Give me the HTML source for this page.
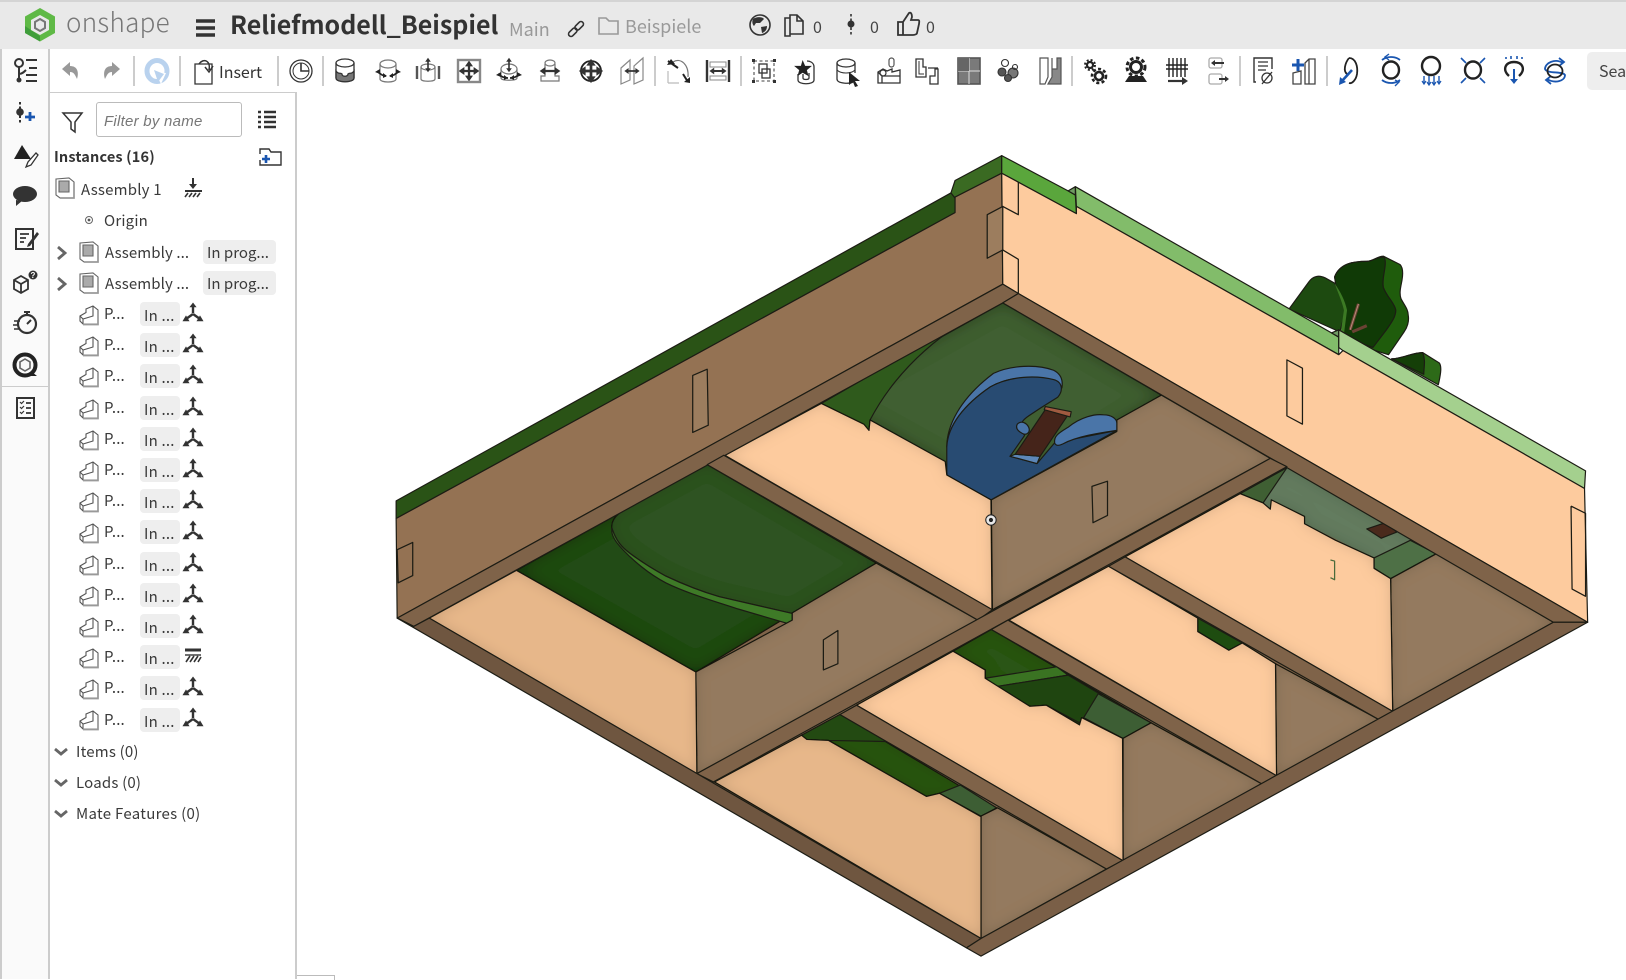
<!DOCTYPE html>
<html><head><meta charset="utf-8"><title>Reliefmodell_Beispiel</title>
<style>
html,body{margin:0;padding:0;background:#fff}
body{width:1626px;height:979px;overflow:hidden;position:relative;font-family:"Noto Sans CJK JP","Liberation Sans",sans-serif;color:#333}
.a{position:absolute;white-space:nowrap;line-height:1}
svg{position:absolute;left:0;top:0;overflow:visible}
.tag{position:absolute;background:#eee;border-radius:4px}
.t{position:absolute;white-space:nowrap;line-height:20px;font-size:15px;color:#3a3a3a;letter-spacing:.2px}
</style></head><body>
<div class="a" style="left:0;top:0;width:1626px;height:49px;background:#e9e9e9;border-top:2px solid #d4d4d4;box-sizing:border-box"></div>
<div class="a" style="left:0;top:49px;height:930px;background:#fafafa;border-left:2px solid #ccc;border-right:2px solid #ccc;width:46px"></div>
<div class="a" style="left:50px;top:92px;width:247px;height:887px;border-top:1px solid #ccc;border-right:2px solid #ccc;box-sizing:border-box;background:#fff"></div>
<div class="a" style="left:297px;top:975px;width:37px;height:4px;border-top:1px solid #bbb;border-right:1px solid #bbb"></div>
<div class="a" style="left:2px;top:386px;width:46px;height:1px;background:#ccc"></div>
<div class="a" style="left:1587px;top:52px;width:39px;height:38px;background:#eee;border-radius:5px 0 0 5px"></div>
<div class="a" style="left:1599px;top:62px;font-size:16px;color:#444">Sea</div>

<div class="a" style="left:66px;top:9px;font-size:26px;color:#777;font-weight:300;letter-spacing:.3px">onshape</div>
<div class="a" style="left:230px;top:12px;font-size:25px;font-weight:700;color:#333;letter-spacing:0">Reliefmodell_Beispiel</div>
<div class="a" style="left:509px;top:20px;font-size:18px;color:#999">Main</div>
<div class="a" style="left:625px;top:17px;font-size:18px;color:#999">Beispiele</div>
<div class="a" style="left:813px;top:18px;font-size:16px;color:#444">0</div>
<div class="a" style="left:870px;top:18px;font-size:16px;color:#444">0</div>
<div class="a" style="left:926px;top:18px;font-size:16px;color:#444">0</div>
<div class="a" style="left:219px;top:63px;font-size:16px;color:#333">Insert</div>

<div class="a" style="left:96px;top:102px;width:146px;height:35px;border:1px solid #bbb;border-radius:3px;box-sizing:border-box"></div>
<div class="a" style="left:104px;top:114px;font-size:15px;font-style:italic;color:#777;letter-spacing:.25px;font-family:'Liberation Sans',sans-serif">Filter by name</div>
<div class="a" style="left:54px;top:150px;font-size:14.5px;font-weight:700;color:#333;letter-spacing:.15px">Instances (16)</div>

<div class="t" style="left:81px;top:180px">Assembly 1</div>
<div class="t" style="left:104px;top:211px">Origin</div>
<div class="t" style="left:105px;top:243px;letter-spacing:.1px">Assembly ...</div><div class="tag" style="left:203px;top:240px;width:73px;height:24px"></div><div class="t" style="left:207px;top:243px;letter-spacing:0">In prog...</div>
<div class="t" style="left:105px;top:274px;letter-spacing:.1px">Assembly ...</div><div class="tag" style="left:203px;top:271px;width:73px;height:24px"></div><div class="t" style="left:207px;top:274px;letter-spacing:0">In prog...</div>

<div class="t" style="left:104px;top:304px">P...</div><div class="tag" style="left:140px;top:302px;width:40px;height:24px"></div><div class="t" style="left:144px;top:306px">In ...</div>
<div class="t" style="left:104px;top:335px">P...</div><div class="tag" style="left:140px;top:333px;width:40px;height:24px"></div><div class="t" style="left:144px;top:337px">In ...</div>
<div class="t" style="left:104px;top:366px">P...</div><div class="tag" style="left:140px;top:364px;width:40px;height:24px"></div><div class="t" style="left:144px;top:368px">In ...</div>
<div class="t" style="left:104px;top:398px">P...</div><div class="tag" style="left:140px;top:396px;width:40px;height:24px"></div><div class="t" style="left:144px;top:400px">In ...</div>
<div class="t" style="left:104px;top:429px">P...</div><div class="tag" style="left:140px;top:427px;width:40px;height:24px"></div><div class="t" style="left:144px;top:431px">In ...</div>
<div class="t" style="left:104px;top:460px">P...</div><div class="tag" style="left:140px;top:458px;width:40px;height:24px"></div><div class="t" style="left:144px;top:462px">In ...</div>
<div class="t" style="left:104px;top:491px">P...</div><div class="tag" style="left:140px;top:489px;width:40px;height:24px"></div><div class="t" style="left:144px;top:493px">In ...</div>
<div class="t" style="left:104px;top:522px">P...</div><div class="tag" style="left:140px;top:520px;width:40px;height:24px"></div><div class="t" style="left:144px;top:524px">In ...</div>
<div class="t" style="left:104px;top:554px">P...</div><div class="tag" style="left:140px;top:552px;width:40px;height:24px"></div><div class="t" style="left:144px;top:556px">In ...</div>
<div class="t" style="left:104px;top:585px">P...</div><div class="tag" style="left:140px;top:583px;width:40px;height:24px"></div><div class="t" style="left:144px;top:587px">In ...</div>
<div class="t" style="left:104px;top:616px">P...</div><div class="tag" style="left:140px;top:614px;width:40px;height:24px"></div><div class="t" style="left:144px;top:618px">In ...</div>
<div class="t" style="left:104px;top:647px">P...</div><div class="tag" style="left:140px;top:645px;width:40px;height:24px"></div><div class="t" style="left:144px;top:649px">In ...</div>
<div class="t" style="left:104px;top:678px">P...</div><div class="tag" style="left:140px;top:676px;width:40px;height:24px"></div><div class="t" style="left:144px;top:680px">In ...</div>
<div class="t" style="left:104px;top:710px">P...</div><div class="tag" style="left:140px;top:708px;width:40px;height:24px"></div><div class="t" style="left:144px;top:712px">In ...</div>
<div class="t" style="left:76px;top:742px">Items (0)</div>
<div class="t" style="left:76px;top:773px">Loads (0)</div>
<div class="t" style="left:76px;top:804px;letter-spacing:.3px">Mate Features (0)</div>

<!-- 3D model -->
<svg width="1626" height="979" viewBox="0 0 1568 944" style="left:0;top:0">
<defs>
<filter id="ao" x="-10%" y="-10%" width="120%" height="120%"><feFlood flood-color="#000" flood-opacity=".6" result="f"/><feComposite in="f" in2="SourceAlpha" operator="out" result="o"/><feGaussianBlur in="o" stdDeviation="8" result="b"/><feComposite in="b" in2="SourceAlpha" operator="in" result="i"/><feMerge><feMergeNode in="SourceGraphic"/><feMergeNode in="i"/></feMerge></filter>
<filter id="ao2" x="-10%" y="-10%" width="120%" height="120%"><feFlood flood-color="#000" flood-opacity=".32" result="f"/><feComposite in="f" in2="SourceAlpha" operator="out" result="o"/><feGaussianBlur in="o" stdDeviation="7" result="b"/><feComposite in="b" in2="SourceAlpha" operator="in" result="i"/><feMerge><feMergeNode in="SourceGraphic"/><feMergeNode in="i"/></feMerge></filter>
</defs>
<g stroke="#1c1c14" stroke-width="1.15" stroke-linejoin="round">
<!-- tree -->
<path d="M1287,267 C1292,254 1305,252 1318,252 C1324,252 1328,247 1334,247 L1350,255 C1353,258 1353,264 1352,270 C1351,276 1349,282 1351,288 C1354,294 1358,298 1358,304 C1359,310 1357,316 1354,320 L1339,342 L1300,330 Z" fill="#1f5c0c"/>
<path d="M1287,267 C1292,254 1305,252 1318,252 C1324,252 1328,247 1335,248 C1338,256 1332,268 1334,277 C1337,286 1345,292 1346,299 C1346,306 1341,312 1337,318 L1324,335 L1295,325 Z" fill="#103a06"/>
<path d="M1243,298 L1262,272 C1266,266 1272,265 1278,268 L1287,273 C1292,282 1296,290 1298,299 L1292,320 Z" fill="#1d4a10"/>
<path d="M1287,273 C1293,282 1297,290 1299,299 L1296,322 L1293,320 L1296,299 C1294,290 1290,282 1287,273 Z" fill="#3c7a24" stroke="none"/>
<path d="M1342,346 C1352,346 1362,340 1372,340 L1388,350 C1390,353 1390,358 1387,371 Z" fill="#2d6a18"/>
<path d="M1342,346 C1352,346 1362,340 1372,340 C1375,348 1373,354 1373,361 Z" fill="#153f08"/>
<path d="M1310,293 L1302,318 M1304,320 L1318,314" fill="none" stroke="#6b4234" stroke-width="3"/>
<path d="M1310,293 L1302,318" fill="none" stroke="#b58b78" stroke-width="1"/>
<!-- top strips -->
<polygon points="382,483 917,186 921,183 921,205 382,500" fill="#2a5316"/>
<polygon points="917,186 921,174 966,150 966,167 921,191" fill="#3a6a22"/>
<polygon points="966,150 1030,184 1037,188 1038,206 966,167" fill="#5aa63c"/>
<polygon points="1030,184 1037,180 1037,188" fill="#6f9a62"/>
<polygon points="1037,180 1284,321 1291,325 1291,342 1038,199" fill="#82bc6a"/>
<polygon points="1284,321 1291,318 1291,325" fill="#6f9a62"/>
<polygon points="1291,318 1529,454 1528,471 1295,338 1291,335" fill="#a4d08e"/>
<!-- outer walls -->
<polygon points="382,500 921,205 921,190 966,167 967,274 383,596" fill="#947253"/>
<polygon points="966,167 1038,206 1038,199 1291,342 1295,338 1528,471 1531,600 982,283 967,274" fill="#fdcb9e"/>
<!-- base under interior -->
<polygon points="383,596 967,274 1531,600 946,922" fill="#7f6349" stroke="none"/>
<!-- floor greens -->
<polygon points="792,389 967,292 1120,381 955,482 913,458 911,445 839,405" fill="#415f33" filter="url(#ao)"/>
<path d="M792,389 L926,312 Q868,350 839,405 L838,415 L832,409 Z" fill="#2f5a1c"/>
<polygon points="498,550 682,448 845,543 671,648" fill="#234b12" filter="url(#ao)"/>
<path d="M682,448 L845,543 L764,591.5 L693.6,575.4 C675,570 660,564 642,555.5 C630,549 620,543 607.5,533.6 C600,528 594,522 590,509 C589,498 600,492 614,485 Z" fill="#2f5320" filter="url(#ao2)"/>
<path d="M590,509 C594,522 600,528 607.5,533.6 C620,543 630,549 642,555.5 C660,564 675,570 693.6,575.4 L764,591.5 L764,601 L759,601 L711,587 C690,580 662,572 642,562 C625,553 610,540 600.6,530 C595,524 591,519 590,513 Z" fill="#3e7a27"/>
<polygon points="1196,476 1241,450 1385,534 1341,558 1325,548 1325,538 1258,505 1258,498 1226,482 1225,491 1218,485" fill="#647c5f" stroke="none" filter="url(#ao2)"/>
<polygon points="1196,476 1241,451 1218,485" fill="#3f5f33"/>
<polygon points="1325,538 1360,521 1385,534 1341,558 1325,548" fill="#4e7046"/>
<polygon points="1318,510 1336,504 1347,513 1332,519" fill="#4a2a1c"/>
<polygon points="1155,596 1198,620 1185,627 1155,609" fill="#1e4c10"/>
<polygon points="919,628 956,607 1110,697 1083,712 1043,692 1041,699 1009,680 993,681 950,654 950,646" fill="#2a5518" filter="url(#ao2)"/>
<polygon points="950,654 1019,643 1030,651 961,662" fill="#3a7322"/>
<polygon points="961,662 1030,651 1062,670 1041,697 1009,680 993,681" fill="#1f4510"/>
<polygon points="1059,669 1110,697 1083,712 1045,692" fill="#3d5e34"/>
<polygon points="773,709 810,689 961,779 946,787 906,765 893,768 799,714 778,713" fill="#2a5518" filter="url(#ao2)"/>
<polygon points="773,709 810,689 855,715 799,714 778,713" fill="#234a12"/>
<polygon points="906,765 926,757 961,779 946,787" fill="#3d5e34"/>
<!-- walls (wall 2 right drawn before blue part) -->
<polygon points="956,482 1077,416 1077,405 1120,381 1225,442 957,588" fill="#947a5e" filter="url(#ao2)"/>
<!-- blue part -->
<path d="M913,431 C913,411 925,385 958,360 C975,352 1000,351 1016,357 C1024,361 1025,368 1024,374 L1016,372 C1000,362 975,362 955,373 C930,390 914,410 913,431 Z" fill="#4a75a8"/>
<path d="M913,458 L913,431 C914,410 930,390 955,373 C975,362 1000,362 1016,366 C1024,368 1026,376 1020,383 L1004,393 L992,401 C986,405 982,410 986,416 L988,420 L974,440 L1000,447 L1017,427 L1077,415 L955.6,482 Z" fill="#284b72"/>
<path d="M981,409 C985,405 990,408 992,412 C994,417 990,420 986,418 C982,416 979,413 981,409 Z" fill="#4a75a8"/>
<path d="M1017,427 C1016,420 1022,417 1030,412 C1042,402 1056,399 1064,400 C1072,400 1077,404 1077,408 L1077,415 C1064,417 1040,420 1025,428 C1021,430 1018,430 1017,427 Z" fill="#4a75a8"/>
<polygon points="974,440 979,438 1003,440 1000,447" fill="#5d87b8"/>
<polygon points="979,438 1008,395 1030,400 1003,440" fill="#45241a"/>
<polygon points="1008,392 1033,397 1032,402 1007,395" fill="#a05a40"/>
<!-- walls -->
<polygon points="671,648 764,598 764,591 845,543 943,598 672,746" fill="#947a5e" filter="url(#ao2)"/>
<polygon points="1341,558 1385,534 1498,600 1343,687" fill="#947a5e" filter="url(#ao2)"/>
<polygon points="1230,640 1330,694 1231,748" fill="#947a5e" filter="url(#ao2)"/>
<polygon points="1083,712 1110,697 1217,756 1083,830" fill="#947a5e" filter="url(#ao2)"/>
<polygon points="946,787 962,779 1067,838 946,905" fill="#947a5e" filter="url(#ao2)"/>
<!-- peach faces -->
<polygon points="414,596 498,550 671,648 672,746" fill="#e7b78a" filter="url(#ao2)"/>
<polygon points="699,439 792,389 833,409 838,415 839,405 911.5,445 913,458 955.6,482 956.6,588" fill="#fdcb9e" filter="url(#ao2)"/>
<polygon points="1085,537 1196,476 1218,485 1225,491 1226,482 1258,498 1258,505 1288,521 1325,538 1325,548 1341,558 1343,686" fill="#fdcb9e" filter="url(#ao2)"/>
<polygon points="973,598 1069,546 1155,596 1155,609 1185,627 1198,620 1230,640 1231,748" fill="#fdcb9e" filter="url(#ao2)"/>
<polygon points="826,680 919,628 950,646 950,654 993,681 1009,680 1041,699 1043,692 1082.5,712 1083,830" fill="#fdcb9e" filter="url(#ao2)"/>
<polygon points="689,754 773,709 778,713 799,714 893.5,768 906,765 946,787.5 946,905" fill="#e7b78a" filter="url(#ao2)"/>
<!-- strips -->
<polygon points="383,596 399,604 967,292 982,283 967,274" fill="#7f6349"/>
<polygon points="982,283 1531,600 1498,600 967,292" fill="#7f6349"/>
<polygon points="682,448 698,439 957,588 943,598" fill="#7f6349"/>
<polygon points="672,746 688,754 1241,450 1225,442" fill="#7f6349"/>
<polygon points="1069,546 1085,537 1343,686 1330,694" fill="#7f6349"/>
<polygon points="956,607 972,598 1231,748 1217,756" fill="#7f6349"/>
<polygon points="810,689 826,680 1083,830 1067,838" fill="#7f6349"/>
<polygon points="383,596 399,604 414,596 946,905 932,914" fill="#6f5640"/>
<polygon points="932,914 946,905 1498,600 1531,600 946,922" fill="#7a5f47"/>
<!-- slots -->
<g fill="none" stroke-width="1.2">
<polygon points="668,362 682,356 683,410 668,417" fill="#9c7d5e"/>
<polygon points="1053,469 1068,464 1068,497 1054,504"/>
<polygon points="794,617 808,608 808,640 794,646"/>
<polygon points="383,530 398,523 398,555 384,562"/>
<polygon points="1241,347 1256,355 1256,409 1241,401"/>
<polyline points="1515,488 1529,495 1529,575 1516,568 1515,488"/>
<polygon points="967,199 952,207 952,249 967,241" fill="#9c7d5e"/>
<polyline points="982,176 982,207 967,199"/>
<polyline points="967,241 982,250 982,283"/>
<path d="M1283,540 L1287,541 L1287,559 L1283,557" stroke="#4a6a3a"/>
</g>
</g>
<circle cx="955.6" cy="501.4" r="5" fill="#e8e8e8" stroke="#222" stroke-width="1"/><circle cx="955.6" cy="501.4" r="2" fill="#222"/>
</svg>

<!-- UI icons -->
<svg width="1626" height="979" viewBox="0 0 1626 979" fill="none" stroke="#333" stroke-width="1.6">
<defs>
<g id="part" stroke="#555" stroke-width="1.1" fill="#fff"><path d="M-9,1 L-3,-2.5 V-6 L4,-9 L9,-5 V9 H-6 L-9,6 Z"/><path d="M-9,1 L-6,4 L4,1 V-9 M-6,4 V9" fill="none"/><path d="M9,-5 V9.5 H-6" stroke="#999" stroke-width="1.7" fill="none"/></g>
<g id="asm" stroke="#666" stroke-width="1.1"><path d="M-9,-9 L4,-10 L9,-6 V10 H-5 L-9,7 Z" fill="#fff"/><path d="M-6,-7 L4,-7 V4 H-6 Z" fill="#aaa"/><path d="M9,-6 V10 H-5" stroke="#999" stroke-width="1.7"/></g>
<g id="mate" fill="#333" stroke="#333" stroke-width="2.4"><path d="M0,-1 V-8 M0,0 L-7,5 M0,0 L7,5" fill="none"/><path d="M0,-11 L-3,-7 H3Z M-10,7 L-4,7 L-7,2Z M10,7 L4,7 L7,2Z" stroke-width=".6"/></g>
<g id="arrh" fill="#333" stroke="none"><path d="M-9,0 L-4,-3.5 V-1 H4 V-3.5 L9,0 L4,3.5 V1 H-4 V3.5Z"/></g>
<g id="arrv" fill="#333" stroke="none"><path d="M0,-9 L-3.5,-4 H-1 V4 H-3.5 L0,9 L3.5,4 H1 V-4 H3.5Z"/></g>
<g id="ring" stroke="#222" stroke-width="2.4"><ellipse cx="0" cy="-1" rx="8" ry="8.5"/></g>
</defs>
<!-- logo -->
<path d="M40,8 L55,16.5 V33 L40,41.5 L25,33 V16.5 Z" fill="#5fb946" stroke="none"/>
<path d="M25,26 L25,33 L40,41.5 L40,36 L31,30 Z" fill="#3f9d3a" stroke="none"/>
<path d="M40,15 L49,20 V30 L40,35 L31,30 V20 Z" fill="#e9e9e9" stroke="none"/>
<path d="M40,19 L45,22 V28 L40,31 L35,28 V22 Z" fill="none" stroke="#777" stroke-width="2"/>
<!-- hamburger -->
<path d="M196,21 H215 M196,28 H215 M196,35 H215" stroke="#333" stroke-width="3.6"/>
<!-- link & folder -->
<g transform="translate(576,29) rotate(-45)" stroke="#333" stroke-width="1.6"><rect x="-9.5" y="-2.5" width="10" height="5" rx="2.5"/><rect x="-.5" y="-2.5" width="10" height="5" rx="2.5"/></g>
<path d="M599,34 V18 H606 L609,21 H618 V34 Z" stroke="#999"/>
<!-- globe -->
<circle cx="760" cy="25" r="10" stroke="#333"/><path d="M753,19 C757,16 763,17 764,19 L760,23 L756,23 L754,26 C752,24 752,21 753,19Z M761,27 L767,26 C767,30 765,32 762,33Z" fill="#333" stroke="none"/>
<!-- docs -->
<path d="M785,18 H790 V15 H797 L803,21 V34 H790 V36 H785 Z M790,18 V34" stroke="#333"/><path d="M797,15 V21 H803" stroke="#333"/>
<!-- node -->
<path d="M851,14 V36" stroke="#333" stroke-width="1.6" stroke-dasharray="2.5 2"/><circle cx="851" cy="24" r="3.5" fill="#333" stroke="none"/>
<!-- thumb -->
<path d="M898,22 H903 L909,13 C911,12 912,14 912,17 L911,20 H918 C920,20 919,23 919,24 L917,33 C917,34 915,35 913,35 H898 Z M903,22 V35" stroke="#333" stroke-width="1.8"/>
<!-- toolbar separators -->
<g stroke="#ccc" stroke-width="2"><path d="M134,56 V86 M180,56 V86 M278,56 V86 M323,56 V86 M655,56 V86 M741,56 V86 M1072,56 V86 M1240,56 V86 M1327,56 V86"/></g>
<!-- undo/redo -->
<path d="M62,69 L70,62 V66 C78,66 79,73 77,79 C75,75 74,72 70,72 V76 Z" fill="#999" stroke="none"/>
<path d="M120,69 L112,62 V66 C104,66 103,73 105,79 C107,75 108,72 112,72 V76 Z" fill="#999" stroke="none"/>
<!-- refresh -->
<ellipse cx="157" cy="71" rx="10" ry="10.5" stroke="#b9d2ee" stroke-width="5"/><path d="M155,72 L166,73 L161,84 Z" fill="#fff" stroke="none"/><path d="M154,70 L164,74 L158,82 Z" fill="#b9d2ee" stroke="none"/>
<!-- insert -->
<path d="M195,64 H203 L212,64 V84 H195 Z" stroke="#333" stroke-width="1.3"/><path d="M199,64 C203,58 211,60 209,70 M205,67 L209,72 L213,66" stroke="#333" stroke-width="1.5"/>
<!-- clock -->
<circle cx="301" cy="71" r="11" stroke="#333" stroke-width="1.3"/><circle cx="301" cy="71" r="8" stroke="#333" stroke-width="1"/><path d="M301,63 V71 H309" stroke="#333"/>
<!-- row 1 -->
<g transform="translate(345,71)" stroke-width="1.3"><path d="M-9,-8 V7 C-9,12 9,12 9,7 V-8" stroke="#333"/><ellipse cx="0" cy="-8" rx="9" ry="4"/><path d="M-9,0 C-6,4 -5,1 -3,3 C-3,6 3,6 3,3 C5,1 6,4 9,0 V7 C9,12 -9,12 -9,7Z" fill="#777" stroke="#333"/></g>
<g transform="translate(388,71)" stroke="#777"><path d="M-8,-7 V8 C-8,12 8,12 8,8 V-7" stroke-width="1.2"/><ellipse cx="0" cy="-7" rx="8" ry="4" stroke-width="1.2"/><path d="M-11,0 C-6,5 -3,5 -2,5 M11,0 C6,5 3,5 2,5" stroke="#222" stroke-width="1.8"/><path d="M-5,2 L-1,5 L-5,7Z M5,2 L1,5 L5,7Z M-13,1 L-8,-2 L-8,3Z M13,1 L8,-2 L8,3Z" fill="#222" stroke="none"/></g>
<g transform="translate(428,72)" stroke="#777"><path d="M-7,-5 V7 C-7,10 7,10 7,7 V-5" stroke-width="1.2"/><ellipse cx="0" cy="-5" rx="7" ry="3" stroke-width="1.2"/><path d="M-11,-6 V7 M11,-6 V7" stroke="#555" stroke-width="2.4"/><use href="#arrv" transform="translate(0,-7) scale(.8)"/></g>
<g transform="translate(469,71)"><rect x="-11" y="-11" width="22" height="22" stroke="#888" stroke-width="2.4"/><path d="M-11,0 H11 M0,-11 V11" stroke="#999" stroke-width="1"/><use href="#arrh" transform="scale(1.15)"/><use href="#arrv" transform="scale(1.15)"/></g>
<g transform="translate(509,71)" stroke="#777"><ellipse cx="0" cy="-2" rx="8" ry="5" stroke-width="1.2"/><path d="M-8,-2 V7 C-8,10 8,10 8,7 V-2" stroke-width="1.2"/><use href="#arrv" transform="translate(0,-6) scale(.8)"/><path d="M-11,3 C-6,7 -3,7 -1,7 M11,3 C6,7 3,7 1,7" stroke="#222" stroke-width="1.8"/><path d="M-13,4 L-8,1 L-8,6Z M13,4 L8,1 L8,6Z M-5,4 L-1,7 L-5,9Z M5,4 L1,7 L5,9Z" fill="#222" stroke="none"/></g>
<g transform="translate(550,71)" stroke="#777" stroke-width="1.2"><path d="M-5,-7 V5 H-9 V10 H9 V5 H5 V-7"/><ellipse cx="0" cy="-8" rx="5" ry="3"/><use href="#arrh" transform="translate(0,0) scale(1.15)"/></g>
<g transform="translate(591,71)"><circle r="10" stroke="#222" stroke-width="1.8"/><use href="#arrh" transform="scale(1.35)"/><use href="#arrv" transform="scale(1.35)"/></g>
<g transform="translate(632,71)" stroke="#888" stroke-width="1.2"><path d="M-11,-3 L-2,-11 V9 L-11,13Z M11,-13 V9 L2,13 V-5Z"/><use href="#arrh" transform="scale(.85)"/></g>
<g transform="translate(679,71)" stroke="#777" stroke-width="1.2"><path d="M-11,12 V0 M-11,12 H0" stroke="#bbb"/><path d="M-6,-9 C2,-14 10,-6 9,6" /><path d="M-11,-10 L-1,-3 M4,3 L9,11" stroke="#222" stroke-width="2"/><path d="M-12,-6 L-8,-12 L-4,-7Z M5,11 L11,12 L11,6Z" fill="#222" stroke="none"/></g>
<g transform="translate(718,71)"><path d="M-11,-11 V11 M11,-11 V11" stroke="#333" stroke-width="2.4"/><rect x="-8" y="-9" width="16" height="5" stroke="#888" stroke-width="1"/><rect x="-8" y="5" width="16" height="4" stroke="#888" stroke-width="1"/><use href="#arrh" transform="scale(.95)"/></g>
<!-- row 2 -->
<g transform="translate(764,71)"><rect x="-10" y="-10" width="20" height="20" stroke="#666" stroke-dasharray="3 2.5" stroke-width="1.3"/><rect x="-5" y="-7" width="8" height="9" stroke="#333" stroke-width="1.3"/><rect x="-2" y="-2" width="8" height="9" stroke="#333" stroke-width="1.3"/><rect x="-12" y="-12" width="3" height="3" fill="#333" stroke="none"/><rect x="9" y="-12" width="3" height="3" fill="#333" stroke="none"/><rect x="-12" y="9" width="3" height="3" fill="#333" stroke="none"/><rect x="9" y="9" width="3" height="3" fill="#333" stroke="none"/></g>
<g transform="translate(806,71)"><path d="M-8,3 V9 C-8,14 8,14 8,9 V-4 C8,-9 3,-10 1,-10 M-3,3 V7 C-3,9 3,9 3,7 V2" stroke="#333" stroke-width="1.3"/><path d="M-4,-13 L-1,-6 L7,-6 L1,-1 L3,6 L-4,2 L-10,6 L-8,-1 L-14,-6 L-6,-6Z" fill="#222" stroke="none" transform="scale(.85)"/></g>
<g transform="translate(846,71)"><path d="M-9,-8 V8 C-9,13 5,13 7,11 M9,-8 V2" stroke="#333" stroke-width="1.3"/><ellipse cx="0" cy="-8" rx="9" ry="4" stroke-width="1.3"/><path d="M-9,-1 C-5,3 5,3 9,-1" stroke-width="1"/><path d="M3,1 L14,10 L9,10 L12,15 L9,16 L7,11 L3,14Z" fill="#222" stroke="none"/></g>
<g transform="translate(889,71)"><path d="M-11,1 L-6,-2 L-2,0 L3,-2 V1 L11,-1 V12 H-11 Z M-11,1 L-7,5 H11 M-7,5 V12" stroke="#333" stroke-width="1.3"/><ellipse cx="-6" cy="2" rx="3" ry="3" stroke-width="1.2"/><rect x="0" y="-13" width="5" height="9" rx="2.5" stroke="#555" stroke-width="1.2"/></g>
<g transform="translate(927,71)" stroke="#333" stroke-width="1.3"><path d="M-11,-12 H-4 V-4 H-1 V6 H-11 Z"/><path d="M-8,-10 V3 H-3" stroke-width="1"/><path d="M1,-3 H11 M3,13 V5 H8 V-2 H11 V13 Z"/></g>
<g transform="translate(969,71)"><rect x="-11" y="-13" width="22" height="26" fill="#7a7a7a" stroke="#555"/><path d="M-11,0 H11 M0,-13 V13" stroke="#ddd" stroke-width="1"/><rect x="-11" y="-13" width="11" height="13" fill="#666" stroke="none"/></g>
<g transform="translate(1009,71)" stroke="#333" stroke-width="1.1"><circle cx="-4" cy="-8" r="3.5"/><circle cx="-7" cy="1" r="4" fill="#555"/><circle cx="4" cy="2" r="5" fill="#777"/><circle cx="-1" cy="7" r="3.5" fill="#555"/><circle cx="6" cy="-4" r="2.5"/></g>
<g transform="translate(1050,71)" stroke="#555" stroke-width="1.2"><path d="M-10,-13 H-2 V6 L-5,13 H-10 Z"/><path d="M2,-13 V6 L-2,13 H11 V-13 H7 V-2 H2Z" fill="#888"/></g>
<!-- gears -->
<g transform="translate(1095,71)"><circle cx="-5" cy="-6" r="3" stroke="#222" stroke-width="2.2"/><circle cx="-5" cy="-6" r="5" stroke="#222" stroke-width="2" stroke-dasharray="2 2"/><circle cx="4" cy="5" r="4" stroke="#222" stroke-width="2.6"/><circle cx="4" cy="5" r="7" stroke="#222" stroke-width="2.6" stroke-dasharray="3 2.3"/></g>
<g transform="translate(1136,70)"><circle cy="-3" r="5.5" stroke="#222" stroke-width="3"/><circle cy="-3" r="9" stroke="#222" stroke-width="3" stroke-dasharray="3.5 2.5"/><path d="M-11,12 L-7,6 H7 L11,12 Z" fill="#222" stroke="none"/></g>
<g transform="translate(1177,71)"><path d="M-8,-13 V6 M-4,-13 V6 M0,-13 V6 M4,-13 V6 M8,-13 V6" stroke="#222" stroke-width="1.4"/><path d="M-11,-6 H11 M-11,-2 H11" stroke="#222" stroke-width="1.4"/><path d="M-9,10 H6" stroke="#333" stroke-width="2.2"/><path d="M5,6 L11,10 L5,14Z" fill="#333" stroke="none"/></g>
<g transform="translate(1217,71)" stroke="#aaa" stroke-width="1.3"><rect x="-8" y="-13" width="13" height="10" rx="2"/><rect x="-8" y="3" width="13" height="10" rx="2"/><path d="M7,-8 H-4" stroke="#333" stroke-width="2"/><path d="M-6,-8 L-2,-11 V-5Z" fill="#333" stroke="none"/><path d="M2,8 H9" stroke="#333" stroke-width="2"/><path d="M12,8 L8,5 V11Z" fill="#333" stroke="none"/></g>
<!-- analysis -->
<g transform="translate(1264,71)"><path d="M-8,11 H-10 V-13 H8 V-2" stroke="#333" stroke-width="1.4"/><path d="M-6,-9 H4 M-6,-5 H4 M-6,-1 H2" stroke="#555" stroke-width="1.5"/><circle cx="3" cy="7" r="5" stroke="#333" stroke-width="1.3"/><path d="M-2,13 L8,1" stroke="#333" stroke-width="1.3"/></g>
<g transform="translate(1304,71)"><path d="M-6,-12 V0 M-12,-6 H0" stroke="#1a56b0" stroke-width="3"/><path d="M-11,2 V13 H-3 V0 Z M1,-8 L5,-12 H11 V13 H1 Z M5,-12 V13" stroke="#444" stroke-width="1.3"/></g>
<!-- sim -->
<g transform="translate(1350,71)"><path d="M-1,-13 C6,-13 8,-4 7,3 C6,9 2,13 -1,12" stroke="#222" stroke-width="1.8"/><path d="M-1,-13 C-5,-8 -7,0 -3,3" stroke="#222" stroke-width="1.8"/><path d="M2,-1 L-8,10" stroke="#1a56b0" stroke-width="2.6"/><path d="M-11,14 L-10,6 L-4,11Z" fill="#1a56b0" stroke="none"/></g>
<g transform="translate(1391,71)"><use href="#ring"/><path d="M-9,-11 C-4,-15 4,-15 9,-11 M-9,9 C-4,13 4,13 9,9" stroke="#1a56b0" stroke-width="1.8"/><path d="M-2,-17 L-6,-14 L-2,-11" stroke="#1a56b0" stroke-width="1.4"/><path d="M4,9 L8,11 L4,15" stroke="#1a56b0" stroke-width="1.4"/></g>
<g transform="translate(1431,69)"><ellipse cy="-3" rx="9" ry="9" stroke="#222" stroke-width="2.4"/><path d="M-7,7 V14 M-2,7 V15 M3,7 V15 M8,7 V14" stroke="#1a56b0" stroke-width="1.4"/><path d="M-9,12 L-7,15 L-5,12 M-4,13 L-2,16 L0,13 M1,13 L3,16 L5,13 M6,12 L8,15 L10,12" stroke="#1a56b0" stroke-width="1.2"/></g>
<g transform="translate(1473,71)"><use href="#ring"/><path d="M-12,-13 L-7,-8 M12,-13 L7,-8 M-12,12 L-7,7 M12,12 L7,7" stroke="#1a56b0" stroke-width="1.6"/></g>
<g transform="translate(1514,70)"><path d="M-5,6 C-12,0 -9,-8 0,-8 C9,-8 12,0 5,6" stroke="#222" stroke-width="2.4"/><path d="M0,-1 V12" stroke="#1a56b0" stroke-width="2"/><path d="M-4,9 L0,14 L4,9Z" fill="#1a56b0" stroke="none"/><path d="M-8,-13 V-11 M-3,-14 V-11 M3,-14 V-11 M8,-13 V-11" stroke="#1a56b0" stroke-width="1.6"/></g>
<g transform="translate(1555,71)" stroke="#1a56b0" stroke-width="1.8"><path d="M8,-8 C0,-13 -10,-8 -10,-2 C-8,3 8,0 10,4 C10,10 0,13 -8,8"/><path d="M4,-13 L9,-9 L4,-5 M-4,13 L-9,9 L-4,5"/><ellipse rx="7.5" ry="6.5" stroke="#222" stroke-width="1.8"/></g>

<!-- rail icons -->
<g transform="translate(25,71)" stroke="#333"><circle cx="-6" cy="-8" r="4" stroke-width="2"/><path d="M-6,-4 V8 M-6,3 C-3,3 -1,1 1,-1" stroke-width="2"/><circle cx="-6" cy="9" r="2.5" fill="#333" stroke="none"/><path d="M1,-11 H12 M4,-3 H12 M1,4 H12 M1,10 H12" stroke-width="2"/></g>
<g transform="translate(25,113)"><path d="M-5,-11 V11" stroke="#333" stroke-width="2" stroke-dasharray="2.5 2"/><circle cx="-5" cy="-1" r="3.8" fill="#333" stroke="none"/><path d="M6,-4 V5 M1,1 H11" stroke="#1a56b0" stroke-width="2.8" transform="translate(-1,3)"/></g>
<g transform="translate(25,155)"><path d="M-11,4 L-3,-10 L6,4 Z" fill="#222" stroke="none"/><path d="M1,12 L3,7 L11,-2 L13,0 L6,10 Z" fill="#fff" stroke="#333" stroke-width="1.3"/></g>
<g transform="translate(25,195)"><ellipse cy="-1" rx="12" ry="8" fill="#333" stroke="none"/><path d="M-9,5 L-9,11 L-3,6 Z" fill="#333" stroke="none"/></g>
<g transform="translate(25,239)"><path d="M-9,-10 H8 V10 H-9 Z" stroke="#333" stroke-width="2"/><path d="M-5,-5 H4 M-5,-1 H1 M-5,3 H-1" stroke="#333" stroke-width="1.8"/><path d="M3,5 L12,-7 L14,-5 L5,7 L2,8 Z" fill="#333" stroke="none"/></g>
<g transform="translate(25,283)"><path d="M-11,-3 L-4,-7 L3,-3 V6 L-4,10 L-11,6 Z M-11,-3 L-4,1 L3,-3 M-4,1 V10" stroke="#333" stroke-width="1.8"/><circle cx="8" cy="-8" r="4.5" fill="#333" stroke="none"/><text x="8" y="-5" font-size="8" font-weight="700" fill="#fff" stroke="none" text-anchor="middle" font-family="Liberation Sans,sans-serif">?</text></g>
<g transform="translate(25,323)"><circle cx="2" cy="1" r="9" stroke="#333" stroke-width="2.2"/><path d="M2,1 L6,-3 M-1,-11 H5 M2,-11 V-8" stroke="#333" stroke-width="2"/><path d="M-11,-2 H-5 M-12,2 H-6 M-11,6 H-6" stroke="#333" stroke-width="1.4"/></g>
<g transform="translate(25,365)"><circle r="10.5" stroke="#222" stroke-width="4"/><path d="M0,-6 L5,-3 V3 L0,6 L-5,3 V-3 Z" stroke="#666" stroke-width="1.6"/><path d="M7,7 L12,11 L6,11 Z" fill="#222" stroke="none"/></g>
<g transform="translate(25,408)"><rect x="-8" y="-10" width="17" height="20" stroke="#333" stroke-width="2"/><path d="M-5,-6 L-3.5,-4.5 L-1,-7 M-5,-1 L-3.5,.5 L-1,-2 M-5,4 L-3.5,5.5 L-1,3" stroke="#333" stroke-width="1.2"/><path d="M1,-5 H6 M1,0 H6 M1,5 H6" stroke="#333" stroke-width="1.8"/></g>

<!-- panel icons -->
<path d="M63,113 H82 L75,122 V132 L71,129 V122 Z" stroke="#333" stroke-width="1.5"/>
<path d="M258,112 H261 M264,112 H276 M258,117 H261 M264,117 H276 M258,122 H261 M264,122 H276 M258,127 H261 M264,127 H276" stroke="#333" stroke-width="2.6"/>
<path d="M260,154 V149 H269 L271,152 H281 V165 H262 M260,160 V165 H262" stroke="#333" stroke-width="1.4"/><path d="M266,155 V163 M262,159 H270" stroke="#1a56b0" stroke-width="2.6"/>
<use href="#asm" transform="translate(65,188)"/>
<g transform="translate(193,188)"><path d="M0,-10 V-3" stroke="#333" stroke-width="2"/><path d="M-4,-4 L0,1 L4,-4Z" fill="#333" stroke="none"/><path d="M-8,3 H9" stroke="#333" stroke-width="2"/><path d="M-8,9 L-5,5 M-4,9 L-1,5 M0,9 L3,5 M4,9 L7,5" stroke="#333" stroke-width="1.6"/></g>
<circle cx="89" cy="220" r="3.5" stroke="#666" stroke-width="1"/><circle cx="89" cy="220" r="1.4" fill="#555" stroke="none"/>
<path d="M58,247 L65,253 L58,259" stroke="#666" stroke-width="2.8"/>
<path d="M58,278 L65,284 L58,290" stroke="#666" stroke-width="2.8"/>
<use href="#asm" transform="translate(89,252)"/><use href="#asm" transform="translate(89,283)"/>
<use href="#part" transform="translate(89,315)"/><use href="#part" transform="translate(89,346)"/><use href="#part" transform="translate(89,377)"/><use href="#part" transform="translate(89,409)"/><use href="#part" transform="translate(89,440)"/><use href="#part" transform="translate(89,471)"/><use href="#part" transform="translate(89,502)"/><use href="#part" transform="translate(89,533)"/><use href="#part" transform="translate(89,565)"/><use href="#part" transform="translate(89,596)"/><use href="#part" transform="translate(89,627)"/><use href="#part" transform="translate(89,658)"/><use href="#part" transform="translate(89,689)"/><use href="#part" transform="translate(89,720)"/>
<use href="#mate" transform="translate(193,314)"/><use href="#mate" transform="translate(193,345)"/><use href="#mate" transform="translate(193,376)"/><use href="#mate" transform="translate(193,408)"/><use href="#mate" transform="translate(193,439)"/><use href="#mate" transform="translate(193,470)"/><use href="#mate" transform="translate(193,501)"/><use href="#mate" transform="translate(193,532)"/><use href="#mate" transform="translate(193,564)"/><use href="#mate" transform="translate(193,595)"/><use href="#mate" transform="translate(193,626)"/><use href="#mate" transform="translate(193,688)"/><use href="#mate" transform="translate(193,719)"/>
<g transform="translate(193,656)"><path d="M-8,-6 H8" stroke="#333" stroke-width="3"/><path d="M-8,-1 H8" stroke="#333" stroke-width="1.4"/><path d="M-7,6 L-3,0 M-3,6 L1,0 M1,6 L5,0 M5,6 L8,1" stroke="#333" stroke-width="1.6"/></g>
<path d="M55,749 L61,754 L67,749" stroke="#666" stroke-width="2.8"/>
<path d="M55,780 L61,785 L67,780" stroke="#666" stroke-width="2.8"/>
<path d="M55,811 L61,816 L67,811" stroke="#666" stroke-width="2.8"/>
</svg>
</body></html>
